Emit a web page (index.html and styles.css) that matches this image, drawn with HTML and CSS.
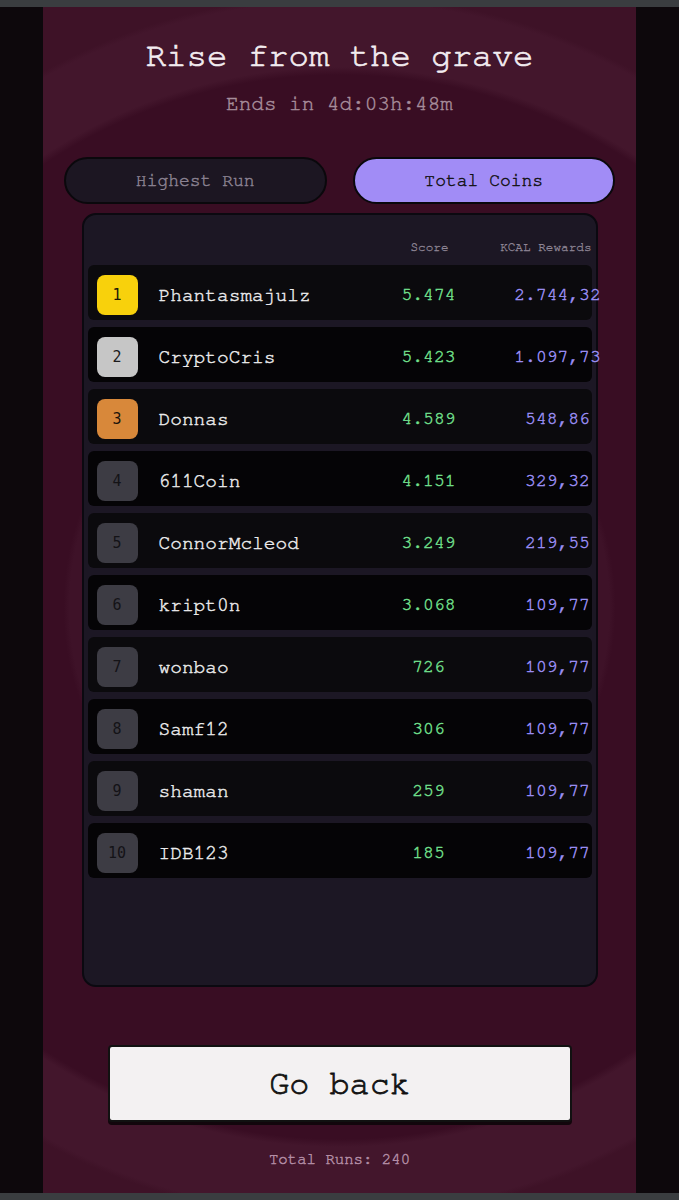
FILE: index.html
```html
<!DOCTYPE html>
<html>
<head>
<meta charset="utf-8">
<link rel="stylesheet" href="styles.css">
</head>
<body>
<div class="sysbar"></div>
<div class="frame">
  <main class="screen">
    <h1 class="title">Rise from the grave</h1>
    <p class="subtitle">Ends in 4d:03h:48m</p>
    <div class="tabs">
      <button class="tab">Highest Run</button>
      <button class="tab active">Total Coins</button>
    </div>
    <section class="board">
      <div class="head">
        <span class="h-score">Score</span>
        <span class="h-kcal">KCAL Rewards</span>
      </div>
      <div class="rows">
        <div class="row"><span class="badge gold">1</span><span class="name">Phantasmajulz</span><span class="score">5.474</span><span class="kcal">2.744,32</span></div>
        <div class="row"><span class="badge silver">2</span><span class="name">CryptoCris</span><span class="score">5.423</span><span class="kcal">1.097,73</span></div>
        <div class="row"><span class="badge bronze">3</span><span class="name">Donnas</span><span class="score">4.589</span><span class="kcal">548,86</span></div>
        <div class="row"><span class="badge">4</span><span class="name">611Coin</span><span class="score">4.151</span><span class="kcal">329,32</span></div>
        <div class="row"><span class="badge">5</span><span class="name">ConnorMcleod</span><span class="score">3.249</span><span class="kcal">219,55</span></div>
        <div class="row"><span class="badge">6</span><span class="name">kript0n</span><span class="score">3.068</span><span class="kcal">109,77</span></div>
        <div class="row"><span class="badge">7</span><span class="name">wonbao</span><span class="score">726</span><span class="kcal">109,77</span></div>
        <div class="row"><span class="badge">8</span><span class="name">Samf12</span><span class="score">306</span><span class="kcal">109,77</span></div>
        <div class="row"><span class="badge">9</span><span class="name">shaman</span><span class="score">259</span><span class="kcal">109,77</span></div>
        <div class="row"><span class="badge">10</span><span class="name">IDB123</span><span class="score">185</span><span class="kcal">109,77</span></div>
      </div>
    </section>
    <button class="goback">Go back</button>
    <p class="runs">Total Runs: 240</p>
  </main>
</div>
<div class="sysbar bottom"></div>
</body>
</html>
```
FILE: styles.css
```css
* { box-sizing: border-box; }
html, body { margin: 0; padding: 0; }
body {
  background: #0d080c;
  font-family: "Nimbus Mono PS", "Nimbus Mono L", "FreeMono", "Courier New", "Liberation Mono", monospace;
  width: 679px;
  height: 1200px;
  overflow: hidden;
  -webkit-text-stroke: 0.45px currentColor;
}
.sysbar {
  height: 7px;
  background: #3a3d40;
}
.frame {
  height: 1186px;
  display: flex;
  justify-content: center;
}
.screen {
  width: 593px;
  height: 1186px;
  display: flex;
  flex-direction: column;
  align-items: center;
  background:
    radial-gradient(circle at 50% 600px,
      #3e1228 0px, #3e1228 270px,
      #390d23 276px, #390d23 532px,
      #43162c 540px, #43162c 606px,
      #3e1227 612px);
}
.title {
  margin: 29px 0 0;
  font-size: 34px;
  line-height: 40px;
  font-weight: normal;
  color: #f3edf1;
  -webkit-text-stroke: 0.7px currentColor;
}
.subtitle {
  margin: 15px 0 0;
  font-size: 21px;
  line-height: 26px;
  color: #a78d9b;
}
.tabs {
  margin-top: 40px;
  width: 551px;
  display: flex;
  gap: 26px;
}
.tab {
  flex: 1;
  height: 47px;
  border: 2px solid #0a080c;
  border-radius: 24px;
  background: #1c1622;
  color: #8b8292;
  font-family: inherit;
  font-size: 18px;
  padding: 0;
  -webkit-text-stroke: 0.45px currentColor;
}
.tab.active {
  background: #a18cf6;
  color: #111;
}
.board {
  margin-top: 9px;
  width: 516px;
  height: 774px;
  border: 2px solid #0b0910;
  border-radius: 14px;
  background: #1c1724;
  padding: 0 4px;
}
.head {
  height: 50px;
  padding-top: 26px;
  display: flex;
  font-size: 12.7px;
  line-height: 14px;
  color: #8e8595;
  -webkit-text-stroke: 0.3px currentColor;
}
.h-score {
  width: 80px;
  margin-left: 302px;
  text-align: center;
}
.h-kcal {
  flex: 1;
  text-align: right;
}
.rows {
  display: flex;
  flex-direction: column;
  gap: 7px;
}
.row {
  height: 55px;
  border-radius: 6px;
  background: #0b0a0d;
  display: flex;
  align-items: center;
  padding: 5px 0 0 9px;
}
.row:nth-child(even) { background: #050406; }
.badge {
  flex: none;
  width: 41px;
  height: 40px;
  border-radius: 8px;
  background: #3d3c44;
  color: #141317;
  font-family: "DejaVu Sans Mono", monospace;
  font-size: 15px;
  -webkit-text-stroke: 0;
  display: flex;
  align-items: center;
  justify-content: center;
}
.badge.gold { background: #f8d10c; color: #1b1908; }
.badge.silver { background: #c6c6c6; color: #1b1b1b; }
.badge.bronze { background: #d8883a; color: #1b130a; }
.name {
  flex: 1;
  margin-left: 21px;
  font-size: 19.5px;
  color: #ebebec;
  white-space: nowrap;
}
.score {
  width: 80px;
  display: flex;
  justify-content: center;
  font-size: 18px;
  color: #72e08d;
}
.kcal {
  width: 68px;
  margin-left: 55px;
  display: flex;
  justify-content: center;
  font-size: 18px;
  color: #9d90f6;
  white-space: nowrap;
}
.goback {
  margin-top: 58px;
  width: 464px;
  height: 77px;
  border: 2px solid #111;
  border-radius: 4px;
  background: #f3f1f2;
  box-shadow: 0 3px 0 #12060c;
  color: #111;
  font-family: inherit;
  font-size: 33.5px;
  padding: 0;
  -webkit-text-stroke: 0.8px currentColor;
}
.runs {
  margin: 27px 0 0;
  font-size: 15.7px;
  line-height: 20px;
  color: #b48ea6;
}
```
